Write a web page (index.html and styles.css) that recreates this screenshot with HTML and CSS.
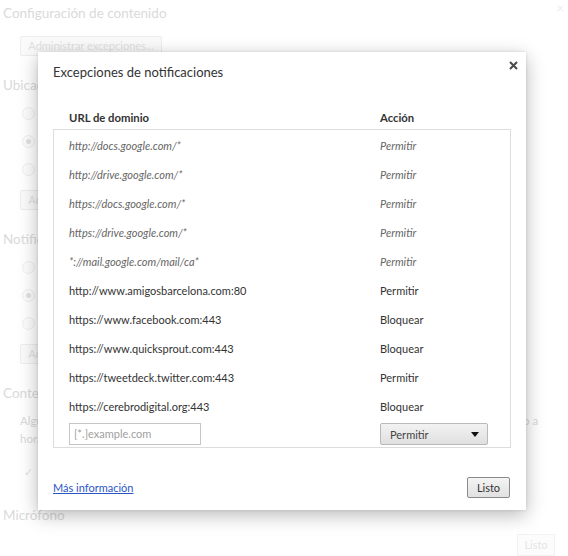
FILE: index.html
```html
<!DOCTYPE html>
<html lang="es">
<head>
<meta charset="utf-8">
<title>Excepciones de notificaciones</title>
<link rel="stylesheet" href="styles.css">
</head>
<body>
<div class="bg">
  <div class="bg-head">
    <h1 class="bg-title">Configuración de contenido</h1>
    <span class="bg-x">×</span>
  </div>
  <div class="bg-btn">Administrar excepciones...</div>
  <h2 class="bg-h">Ubicación</h2>
  <div class="bg-radio"><span class="dot"></span>Permitir que todos los sitios hagan un seguimiento de tu ubicación física</div>
  <div class="bg-radio"><span class="dot on"></span>Preguntar cuando un sitio intente hacer un seguimiento de tu ubicación física</div>
  <div class="bg-radio"><span class="dot"></span>No permitir que ningún sitio haga un seguimiento de tu ubicación física</div>
  <div class="bg-btn bg-btn2">Administrar excepciones...</div>
  <h2 class="bg-h">Notificaciones</h2>
  <div class="bg-radio"><span class="dot"></span>Permitir que todos los sitios muestren notificaciones</div>
  <div class="bg-radio"><span class="dot on"></span>Preguntar cuando un sitio quiera mostrar notificaciones</div>
  <div class="bg-radio"><span class="dot"></span>No permitir que ningún sitio muestre notificaciones</div>
  <div class="bg-btn bg-btn2">Administrar excepciones...</div>
  <h2 class="bg-h">Contenido protegido</h2>
  <p class="bg-p"><span class="bg-line">Algunos servicios de contenido utilizan identificadores de máquina exclusivos para autorizar el acceso al contenido protegido de forma única para cada equipo, a la</span><span class="bg-line">hora de reproducir el contenido protegido.</span></p>
  <div class="bg-check"><span class="tick">✓</span>Permitir identificadores para contenido protegido</div>
  <div class="bg-foot">
    <h2 class="bg-h bg-mic">Micrófono</h2>
    <div class="bg-done">Listo</div>
  </div>
</div>

<div class="overlay">
  <div class="dialog">
    <div class="dlg-head">
      <h1 class="dlg-title">Excepciones de notificaciones</h1>
      <svg class="dlg-close" width="9" height="9" viewBox="0 0 9 9"><path d="M1 1L8 8M8 1L1 8" stroke="#4a4a4a" stroke-width="2"/></svg>
    </div>
    <div class="cols">
      <span>URL de dominio</span>
      <span>Acción</span>
    </div>
    <div class="list">
      <div class="row dim"><span>http://docs.google.com/*</span><span>Permitir</span></div>
      <div class="row dim"><span>http://drive.google.com/*</span><span>Permitir</span></div>
      <div class="row dim"><span>https://docs.google.com/*</span><span>Permitir</span></div>
      <div class="row dim"><span>https://drive.google.com/*</span><span>Permitir</span></div>
      <div class="row dim"><span>*://mail.google.com/mail/ca*</span><span>Permitir</span></div>
      <div class="row"><span>http://www.amigosbarcelona.com:80</span><span>Permitir</span></div>
      <div class="row"><span>https://www.facebook.com:443</span><span>Bloquear</span></div>
      <div class="row"><span>https://www.quicksprout.com:443</span><span>Bloquear</span></div>
      <div class="row"><span>https://tweetdeck.twitter.com:443</span><span>Permitir</span></div>
      <div class="row"><span>https://cerebrodigital.org:443</span><span>Bloquear</span></div>
      <div class="row-new">
        <div class="field">[*.]example.com</div>
        <div class="select"><span>Permitir</span><svg width="8" height="5" viewBox="0 0 8 5"><path d="M0 0H8L4 5Z" fill="#111"/></svg></div>
      </div>
    </div>
    <div class="dlg-foot">
      <a class="more" href="#">Más información</a>
      <div class="btn">Listo</div>
    </div>
  </div>
</div>
</body>
</html>
```

FILE: styles.css
```css
html, body {
  margin: 0;
  padding: 0;
  background: #fff;
  height: 556px;
  overflow: hidden;
}
body {
  font-family: Lato, "Open Sans", sans-serif;
  font-size: 11px;
  color: #333;
  position: relative;
}

/* ---------- faded background page ---------- */
.bg {
  color: #c6c6c6;
  padding: 3px 0 0 3px;
  font-size: 11px;
}
.bg-head {
  display: flex;
  justify-content: space-between;
  align-items: flex-start;
  height: 20px;
}
.bg-title {
  margin: 0;
  font-size: 13.5px;
  font-weight: normal;
  line-height: 20px;
}
.bg-x {
  font-size: 13px;
  line-height: 10px;
  color: #e2e2e2;
  margin-right: 4px;
}
.bg-btn {
  margin: 13px 0 0 17px;
  width: 140px;
  height: 18px;
  line-height: 18px;
  border: 1px solid #e4e4e4;
  background: #f8f8f8;
  color: #d0d0d0;
  font-size: 11px;
  text-align: center;
  border-radius: 2px;
}
.bg-btn2 {
  margin-top: 7px;
}
.bg-h {
  margin: 19px 0 0;
  font-size: 13.5px;
  font-weight: normal;
  line-height: 20px;
}
.bg-radio {
  height: 28px;
  display: flex;
  align-items: center;
  margin-left: 19px;
  white-space: nowrap;
}
.bg-h + .bg-radio {
  margin-top: 4px;
}
.dot {
  width: 11px;
  height: 11px;
  border: 1px solid #e6e6e6;
  border-radius: 50%;
  background: #fafafa;
  margin-right: 8px;
  display: flex;
  align-items: center;
  justify-content: center;
}
.dot.on::after {
  content: "";
  width: 5px;
  height: 5px;
  border-radius: 50%;
  background: #d2d2d2;
}
.bg-p {
  margin: 9px 0 0 17px;
  line-height: 18px;
  font-size: 11.5px;
}
.bg-line {
  display: block;
  white-space: nowrap;
  width: 518px;
  overflow: hidden;
}
.bg-check {
  margin: 14px 0 0 21px;
  height: 20px;
  line-height: 20px;
  display: flex;
  align-items: center;
  white-space: nowrap;
}
.tick {
  color: #d4d4d4;
  margin-right: 10px;
}
.bg-foot {
  display: flex;
  justify-content: space-between;
  align-items: flex-start;
}
.bg-mic {
  margin-top: 23px;
}
.bg-done {
  margin: 52px 13px 0 0;
  width: 36px;
  height: 20px;
  line-height: 20px;
  text-align: center;
  border: 1px solid #ececec;
  background: #fafafa;
  color: #d6d6d6;
}

/* ---------- overlay + dialog ---------- */
.overlay {
  position: absolute;
  inset: 0;
  background: rgba(255, 255, 255, 0.35);
  padding: 52px 0 0 38px;
  box-sizing: border-box;
}
.dialog {
  width: 488px;
  background: #fff;
  box-shadow: 0 5px 18px rgba(0, 0, 0, 0.28), 0 0 3px rgba(0, 0, 0, 0.12);
  padding-bottom: 12px;
}
.dlg-head {
  display: flex;
  justify-content: space-between;
  align-items: flex-start;
  padding: 10px 8px 0 15px;
}
.dlg-title {
  margin: 0;
  font-size: 13px;
  font-weight: normal;
  line-height: 20px;
  color: #333;
}
.dlg-close {
  display: block;
  margin-top: -1px;
}
.cols {
  display: grid;
  grid-template-columns: 311px 1fr;
  margin: 28px 15px 0;
  padding-left: 16px;
  font-weight: bold;
  font-size: 11.3px;
  line-height: 16px;
  color: #333;
}
.list {
  margin: 3px 15px 0;
  border: 1px solid #dcdcdc;
  padding-top: 1px;
}
.row {
  display: grid;
  grid-template-columns: 311px 1fr;
  align-items: center;
  height: 29px;
  padding-left: 15px;
  color: #333;
}
.row.dim {
  font-style: italic;
  color: #666;
}
.row-new {
  display: grid;
  grid-template-columns: 311px 108px;
  height: 26px;
  padding: 2px 0 0 15px;
  box-sizing: border-box;
}
.field {
  width: 132px;
  height: 22px;
  box-sizing: border-box;
  border: 1px solid #c6c6c6;
  color: #a0a0a0;
  padding-left: 4px;
  line-height: 20px;
}
.select {
  height: 22px;
  box-sizing: border-box;
  border: 1px solid #b9b9b9;
  background: linear-gradient(#f2f2f2, #e0e0e0);
  display: flex;
  align-items: center;
  justify-content: space-between;
  padding: 0 8px 0 9px;
  color: #444;
  border-radius: 2px;
}
.dlg-foot {
  display: flex;
  justify-content: space-between;
  align-items: center;
  margin-top: 29px;
  padding: 0 16px 0 15px;
}
.more {
  color: #2a55c4;
  text-decoration: underline;
}
.btn {
  width: 43px;
  height: 21px;
  box-sizing: border-box;
  line-height: 19px;
  text-align: center;
  border: 1px solid #8a8a8a;
  border-radius: 2px;
  background: linear-gradient(#f4f4f4, #e1e1e1);
  color: #333;
}
```
